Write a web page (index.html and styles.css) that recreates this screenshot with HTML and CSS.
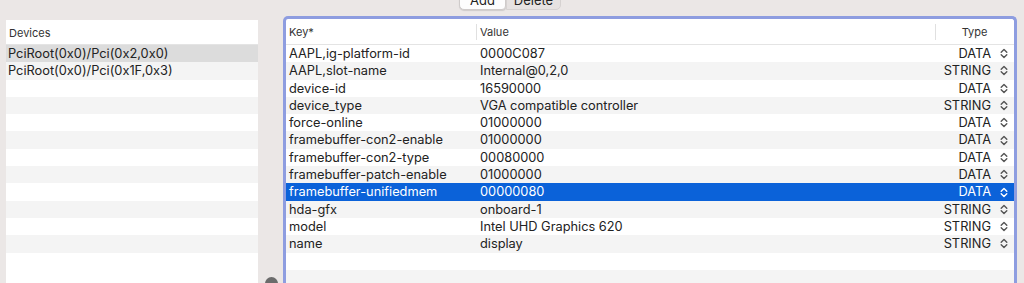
FILE: index.html
```html
<!DOCTYPE html>
<html lang="en">
<head>
  <meta charset="UTF-8" />
  <title>Device Properties</title>
  <link rel="stylesheet" href="styles.css">
</head>
<body>

  <div class="toolbar">
    <div class="segmented">
      <button class="seg seg-on">Add</button>
      <button class="seg">Delete</button>
    </div>
  </div>

  <div class="main">
    <div class="devices">
      <div class="list-head">Devices</div>
      <div class="row selected-gray">PciRoot(0x0)/Pci(0x2,0x0)</div>
      <div class="row">PciRoot(0x0)/Pci(0x1F,0x3)</div>
      <div class="row"></div>
      <div class="row"></div>
      <div class="row"></div>
      <div class="row"></div>
      <div class="row"></div>
      <div class="row"></div>
      <div class="row"></div>
      <div class="row"></div>
      <div class="row"></div>
      <div class="row"></div>
      <div class="row"></div>
    </div>

    <div class="gutter">
      <div class="round-btn"></div>
    </div>

    <div class="props">
      <div class="prop-head">
        <div class="c-key">Key*</div>
        <div class="c-val head-sep">Value</div>
        <div class="c-type head-sep">Type</div>
      </div>
      <div id="prop-rows"></div>
    </div>
  </div>

  <script>
    const props = [
      ["AAPL,ig-platform-id", "0000C087", "DATA"],
      ["AAPL,slot-name", "Internal@0,2,0", "STRING"],
      ["device-id", "16590000", "DATA"],
      ["device_type", "VGA compatible controller", "STRING"],
      ["force-online", "01000000", "DATA"],
      ["framebuffer-con2-enable", "01000000", "DATA"],
      ["framebuffer-con2-type", "00080000", "DATA"],
      ["framebuffer-patch-enable", "01000000", "DATA"],
      ["framebuffer-unifiedmem", "00000080", "DATA"],
      ["hda-gfx", "onboard-1", "STRING"],
      ["model", "Intel UHD Graphics 620", "STRING"],
      ["name", "display", "STRING"]
    ];

    const chevrons = '<svg width="8" height="11" viewBox="0 0 8 11"><path d="M1.2 4.3 L4 1.5 L6.8 4.3 M1.2 6.7 L4 9.5 L6.8 6.7" fill="none" stroke="currentColor" stroke-width="1.4" stroke-linecap="round" stroke-linejoin="round"/></svg>';

    let html = "";
    props.forEach(function (p, i) {
      const cls = i === 8 ? "row prow selected" : "row prow";
      html += '<div class="' + cls + '">' +
        '<div class="c-key">' + p[0] + '</div>' +
        '<div class="c-val">' + p[1] + '</div>' +
        '<div class="c-type">' + p[2] + '</div>' +
        '<div class="c-pop">' + chevrons + '</div>' +
        '</div>';
    });
    // empty striped rows below
    for (let i = 0; i < 3; i++) {
      html += '<div class="row prow"></div>';
    }
    document.getElementById("prop-rows").innerHTML = html;
  </script>

</body>
</html>
```

FILE: styles.css
```css
body {
  margin: 0;
  width: 1024px;
  height: 283px;
  overflow: hidden;
  background-color: #ebe7e6;
  font-family: Inter, "Noto Sans", sans-serif;
  font-size: 12.8px;
  color: #222;
}
.toolbar {
  display: flex;
  align-items: flex-end;
  height: 16px;
}
.segmented {
  display: flex;
  margin-left: 459px;
  margin-bottom: 6px;
  width: 102px;
  height: 17px;
  flex-shrink: 0;
}
.seg {
  font-family: Inter, sans-serif;
  font-size: 13px;
  color: #222;
  border: 1px solid #d6d2d1;
  background-color: #e6e2e1;
  border-radius: 0 0 5px 0;
  padding: 0 0 4px 0;
  width: 55px;
  height: 17px;
  line-height: 12px;
}
.seg-on {
  width: 47px;
  background-color: #fdfdfd;
  border-color: #cfcbca;
  border-radius: 0 0 4px 5px;
  box-shadow: 0 1px 1px rgba(0, 0, 0, 0.12);
}
.main {
  display: flex;
  height: 267px;
  padding: 0 7px 0 6px;
}
.devices {
  width: 252px;
  margin-top: 4px;
  background-color: #fff;
}
.list-head {
  height: 24px;
  line-height: 26px;
  font-size: 11px;
  color: #333;
  padding-left: 3px;
  border-bottom: 1px solid #e4e4e4;
}
.row {
  height: 17.3px;
  line-height: 18.6px;
  padding-left: 2px;
  white-space: nowrap;
  overflow: hidden;
}
.devices .row:nth-child(odd) {
  background-color: #f4f4f4;
}
.devices .selected-gray {
  background-color: #dcdcdc;
}
.gutter {
  width: 25px;
  display: flex;
  flex-direction: column;
  align-items: center;
}
.round-btn {
  margin-top: auto;
  margin-bottom: -7px;
  margin-left: 1px;
  width: 13px;
  height: 13px;
  border-radius: 50%;
  background-color: #6b6b6b;
}
.props {
  flex: 1;
  border: 3px solid #8e9de0;
  border-bottom: none;
  border-radius: 5px 5px 0 0;
  background-color: #fff;
  overflow: hidden;
}
.prop-head {
  display: flex;
  height: 25px;
  line-height: 27px;
  font-size: 11px;
  color: #333;
  border-bottom: 1px solid #e4e4e4;
}
.head-sep {
  position: relative;
}
.head-sep::before {
  content: "";
  position: absolute;
  left: 0;
  top: 5px;
  height: 16px;
  border-left: 1px solid #e0e0e0;
}
.prow {
  display: flex;
  padding-left: 0;
}
#prop-rows .prow:nth-child(even) {
  background-color: #f4f4f4;
}
.c-key {
  width: 190px;
  padding-left: 3px;
  box-sizing: border-box;
}
.c-val {
  width: 459px;
  padding-left: 4px;
  box-sizing: border-box;
}
.c-type {
  width: 59px;
  text-align: right;
  padding-right: 3px;
  box-sizing: border-box;
}
.prop-head .c-type {
  width: 79px;
  padding-right: 0;
  text-align: center;
}
.c-pop {
  width: 20px;
  display: flex;
  align-items: center;
  justify-content: center;
  color: #555;
}
#prop-rows .selected {
  background-color: #0b62d9;
  color: #fff;
}
#prop-rows .selected .c-pop {
  color: #fff;
}
```
